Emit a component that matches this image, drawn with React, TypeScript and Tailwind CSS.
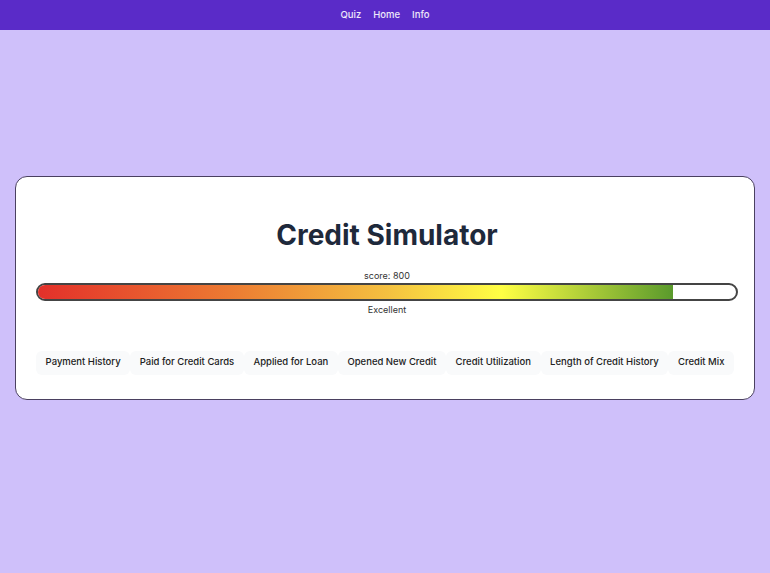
import { useState } from 'react';

const tabs = [
  'Payment History',
  'Paid for Credit Cards',
  'Applied for Loan',
  'Opened New Credit',
  'Credit Utilization',
  'Length of Credit History',
  'Credit Mix',
];

const score = 800;
const pct = ((score - 300) / (850 - 300)) * 100;

const App = () => {
  const [active, setActive] = useState<string | null>(null);

  return (
    <div className="flex flex-col min-h-screen bg-[#cfc0fa] font-['Inter',sans-serif]">
      <nav className="h-[30px] bg-[#5a2bc8] flex items-center justify-center gap-3 text-[9.5px] font-medium text-white/90">
        <a href="#">Quiz</a>
        <a href="#">Home</a>
        <a href="#">Info</a>
      </nav>
      <main className="flex-1 flex items-center px-[15px] pb-[28px]">
        <div className="w-full bg-white border border-[#4a4060] rounded-xl pl-5 pr-4 pt-[39px] pb-[24px]">
          <h1 className="text-[28px] font-bold text-[#1e293b] text-center leading-[38px]">Credit Simulator</h1>
          <div className="mt-[15px] text-center text-[9px] text-[#333] leading-[14px]">score: {score}</div>
          <div className="h-[18px] rounded-full border-2 border-[#444] overflow-hidden bg-white">
            <div
              className="h-full bg-[linear-gradient(to_right,#e3302a,#ec7a32_30%,#f4c040_55%,#ffff44_73%,#5a9a2c)]"
              style={{ width: `${pct}%` }}
            />
          </div>
          <div className="mt-[2px] text-center text-[9px] text-[#333] leading-[14px]">Excellent</div>
          <div className="mt-[34px] mr-1 flex">
            {tabs.map((t) => (
              <button
                key={t}
                onClick={() => setActive(t)}
                className={`flex-auto whitespace-nowrap h-[24px] px-2 rounded-md text-[9.5px] font-medium text-[#222] ${
                  active === t ? 'bg-gray-200' : 'bg-gray-50'
                }`}
              >
                {t}
              </button>
            ))}
          </div>
        </div>
      </main>
    </div>
  );
};

export default App;
